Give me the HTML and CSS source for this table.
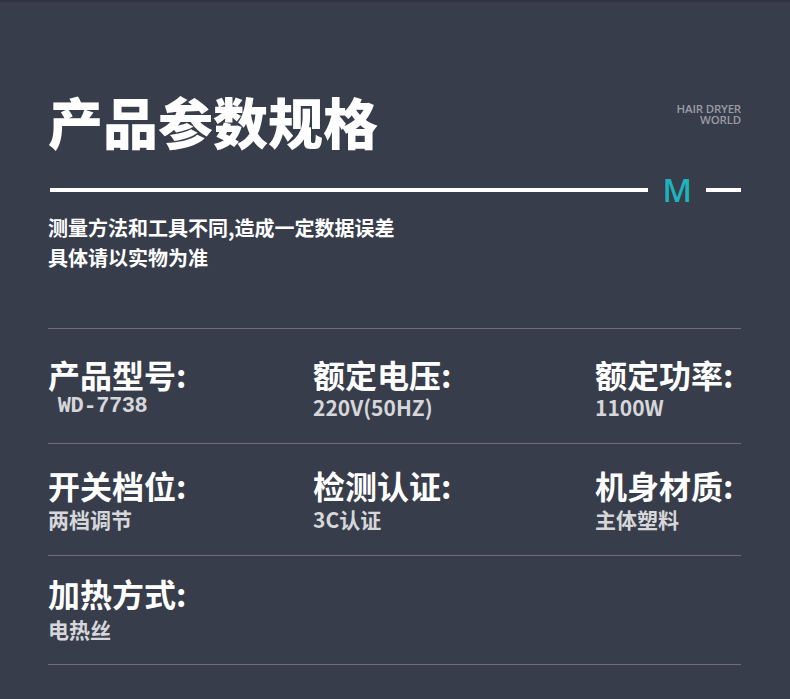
FILE: index.html
```html
<!DOCTYPE html>
<html lang="zh-CN">
<head>
<meta charset="utf-8">
<link rel="stylesheet" href="styles.css">
</head>
<body>
<div class="page">
  <header class="head">
    <h1 class="title">产品参数规格</h1>
    <div class="brand">HAIR DRYER<br>WORLD</div>
  </header>
  <div class="rule">
    <span class="bar long"></span>
    <span class="mark">M</span>
    <span class="bar short"></span>
  </div>
  <p class="note">测量方法和工具不同,造成一定数据误差<br>具体请以实物为准</p>
  <div class="specs">
    <div class="row r1">
      <div class="cell"><div class="label">产品型号:</div><div class="value mono">&nbsp;WD-7738</div></div>
      <div class="cell"><div class="label">额定电压:</div><div class="value">220V(50HZ)</div></div>
      <div class="cell"><div class="label">额定功率:</div><div class="value">1100W</div></div>
    </div>
    <div class="row r2">
      <div class="cell"><div class="label">开关档位:</div><div class="value">两档调节</div></div>
      <div class="cell"><div class="label">检测认证:</div><div class="value">3C认证</div></div>
      <div class="cell"><div class="label">机身材质:</div><div class="value">主体塑料</div></div>
    </div>
    <div class="row r3">
      <div class="cell"><div class="label">加热方式:</div><div class="value">电热丝</div></div>
    </div>
  </div>
</div>
</body>
</html>
```
FILE: styles.css
```css
html, body {
  margin: 0;
  padding: 0;
  background: #383d4b;
}
body {
  width: 790px;
  height: 699px;
  overflow: hidden;
  border-top: 2px solid #2f3440;
  box-sizing: border-box;
  font-family: "Noto Sans CJK SC", "Noto Sans", sans-serif;
  color: #ffffff;
}
.page {
  padding: 0 49px 0 48px;
}
.head {
  display: flex;
  justify-content: space-between;
  align-items: flex-start;
  padding-top: 78px;
}
.title {
  margin: 0;
  font-size: 55px;
  line-height: 80px;
  font-weight: 900;
  letter-spacing: 0;
}
.brand {
  margin-top: 23px;
  text-align: right;
  font-family: "Open Sans", "DejaVu Sans", sans-serif;
  font-size: 11.5px;
  line-height: 11px;
  color: #9a9ca4;
  font-weight: 600;
  letter-spacing: -0.2px;
}
.rule {
  display: flex;
  align-items: center;
  margin-top: 20px;
  height: 20px;
}
.bar {
  height: 4px;
  background: #ffffff;
}
.bar.long {
  flex: 1;
  margin-left: 2px;
}
.bar.short {
  width: 35px;
}
.mark {
  font-family: "Open Sans", "DejaVu Sans", sans-serif;
  font-size: 32px;
  line-height: 20px;
  color: #1fb3bc;
  margin: 0 14px 0 15px;
  font-weight: 600;
}
.note {
  margin: 13px 0 0;
  font-size: 20px;
  line-height: 30px;
  font-weight: 700;
  color: #ffffff;
}
.specs {
  margin-top: 55px;
  border-top: 1px solid #6a6f7b;
}
.row {
  display: grid;
  grid-template-columns: 265px 282px 1fr;
  border-bottom: 1px solid #6a6f7b;
  box-sizing: border-box;
}
.r1 { height: 115px; padding-top: 25px; }
.r2 { height: 112px; padding-top: 21px; }
.r3 { height: 109px; padding-top: 17px; }
.label {
  font-size: 32px;
  line-height: 40px;
  font-weight: 700;
  color: #ffffff;
}
.value {
  font-size: 21px;
  line-height: 24px;
  font-weight: 700;
  color: #d6d7da;
  margin-top: 1px;
}
.r2 .value { margin-top: 2px; }
.r3 .value { margin-top: 4px; }
.value.mono {
  font-family: "Liberation Mono", "DejaVu Sans Mono", monospace;
  font-size: 22px;
  letter-spacing: -0.4px;
  margin-left: -3px;
}
```
